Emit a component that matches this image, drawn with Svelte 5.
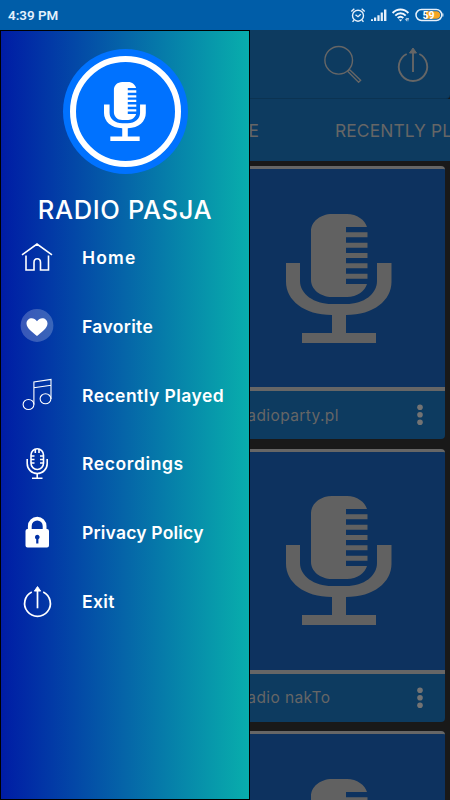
<script>
  // Entries of the side menu
  const menu = [
    { icon: "home", label: "Home", spacing: 1.2 },
    { icon: "heart", label: "Favorite", spacing: 0.35 },
    { icon: "music", label: "Recently Played", spacing: 0.45 },
    { icon: "mic", label: "Recordings", spacing: 0.6 },
    { icon: "lock", label: "Privacy Policy", spacing: 0.2 },
    { icon: "exit", label: "Exit", spacing: 0.4 }
  ];

  // Stations in the right column of the list
  const stations = ["Radioparty.pl", "Radio nakTo", ""];
</script>

{#snippet mic()}
  <svg class="mic" viewBox="0 0 106 129" preserveAspectRatio="none">
    <path d="M60 0H46C34 0 25 8 25 17V66C25 75 34 83 46 83H61C71 83 79 77 81 70H60V64.7H81.5V59.7H60V54.3H81.5V49.3H60V44H81.5V39H60V33.7H81.5V28.7H60V23.3H81.5V18.3H60V13H81C79 6 71 0 61 0Z" />
    <path d="M0 49H14V67C14 80 28 90 46 90H60C78 90 91 80 91 67V49H105.500V68C105.500 86 88 101 60 101V119H90V129H16V119H46V101C18 101 0 86 0 68Z" />
  </svg>
{/snippet}

{#snippet power()}
  <svg class="power" viewBox="0 0 32 34">
    <path class="ring" d="M9.700 6.500A14.200 14.200 0 1 0 22.300 6.500" />
    <path class="ring" d="M16 5V24.500" />
    <path class="tip" d="M16 .5L19.500 5.500H12.500Z" />
  </svg>
{/snippet}

<div class="screen">
  <div class="status">
    <span class="time">4:39 PM</span>
    <svg class="indicators" viewBox="-6 0 100 20">
      <g fill="none" stroke="#e6f0fa" stroke-width="1.400">
        <circle cx="2" cy="10.700" r="5.500" />
        <path d="M-.5 9.700L2 11.700L4.800 9.200M-4.700 6.500L-1.700 3.800M8.700 6.500L5.700 3.800M-2 15.200L-3.500 16.700M6 15.200L7.500 16.700" />
      </g>
      <path fill="#e6f0fa" d="M15 16V14.300H17V16ZM18 16V12.500H20.200V16ZM21.400 16V10.300H23.600V16ZM24.700 16V7.500H26.900V16ZM28 16V4.500H30.400V16Z" />
      <g fill="none" stroke="#f2f7fd" stroke-width="1.900">
        <path d="M36.600 8C41 3.300 48 3.300 52.400 8M39.300 10.600C42.300 7.500 46.800 7.500 49.700 10.600M41.700 13C43.600 11.200 45.500 11.200 47.300 13" />
      </g>
      <path fill="#f2f7fd" d="M44.500 16.500L42.700 14.500H46.300ZM49.300 14.500L50.700 12.500V16.500ZM51.200 13H52.700L52 17Z" />
      <rect x="60" y="4.500" width="25.800" height="11" rx="5.500" fill="none" stroke="#e6f0fa" stroke-width="1.500" />
      <path fill="#f5a623" d="M70 6.200H80.300A3.800 3.800 0 0 1 80.300 13.800H70Z" />
      <path fill="#e6f0fa" d="M86.400 8.500H87.400V11.500H86.400Z" />
      <text x="72.500" y="13.800" text-anchor="middle">59</text>
    </svg>
  </div>

  <div class="toolbar">
    <svg class="search" viewBox="0 0 38 38">
      <circle cx="14.700" cy="15.300" r="13.800" />
      <path d="M25.400 24.600L36.600 35.200L34.600 37.200L23.600 26.200M25.400 24.600L23.400 26.600" />
    </svg>
    {@render power()}
  </div>

  <div class="tabs">
    <span class="tab home">HOME</span>
    <span class="tab">RECENTLY PLAYED</span>
  </div>

  <div class="list">
    {#each stations as station}
      <div class="card">
        <div class="cover">{@render mic()}</div>
        <div class="caption">
          <span>{station}</span>
          <svg class="dots" viewBox="0 0 6 22">
            <circle cx="3" cy="3.200" r="2.800" />
            <circle cx="3" cy="10.700" r="2.800" />
            <circle cx="3" cy="18.200" r="2.800" />
          </svg>
        </div>
      </div>
    {/each}
  </div>

  <nav class="drawer">
    <div class="logo">
      <div class="disc">{@render mic()}</div>
    </div>
    <h1>RADIO PASJA</h1>
    <ul>
      {#each menu as item}
        <li>
          <div class="icon">
            {#if item.icon === "exit"}
              {@render power()}
            {:else}
              <svg viewBox="0 0 34 34">
                {#if item.icon === "home"}
                  <path class="line" d="M2 13.800L17 3L32 13.800M6 14.500V29H14V21.500C14 16.500 20.500 16.500 20.500 21.500V29H28.500V14.500" />
                {:else if item.icon === "heart"}
                  <circle cx="17" cy="16.500" r="16.400" fill="#fff" fill-opacity=".22" />
                  <path class="solid" d="M17 27C13 23.500 6.500 19.500 6.500 14.500C6.500 9 13.500 7 17 12.200C20.500 7 27.500 9 27.500 14.500C27.500 19.500 21 23.500 17 27Z" />
                {:else if item.icon === "music"}
                  <g class="line thin">
                    <ellipse cx="8.500" cy="26.500" rx="5.400" ry="5" />
                    <ellipse cx="25.500" cy="20.800" rx="5.400" ry="5" />
                    <path d="M13.900 26.500V4L31 1.500V21M13.900 9.800L31 7.300" />
                  </g>
                {:else if item.icon === "mic"}
                  <g class="line">
                    <rect x="11" y="1.800" width="12.500" height="20.700" rx="6.200" />
                    <path d="M7.200 12V16.500A9.900 9.900 0 0 0 27.200 16.500V12M17.200 26.500V31M12 31.300H22.500M11 9H14.500M11 12.500H14.500M11 16H14.500M20 9H23.500M20 12.500H23.500M20 16H23.500M15.300 2V6M19 2V6" />
                  </g>
                {:else}
                  <path d="M9.800 15V10A7.400 7.400 0 0 1 24.600 10V15" fill="none" stroke="#fff" stroke-width="3.800" />
                  <path class="solid" fill-rule="evenodd" d="M7.500 13H27Q29 13 29 15V29.500Q29 31.500 27 31.500H7.500Q5.500 31.500 5.500 29.500V15Q5.500 13 7.500 13ZM17.200 18.800A2.400 2.400 0 0 0 16.200 23.300V27.500H18.400V23.300A2.400 2.400 0 0 0 17.200 18.800Z" />
                {/if}
              </svg>
            {/if}
          </div>
          <span style="letter-spacing: {item.spacing}px">{item.label}</span>
        </li>
      {/each}
    </ul>
  </nav>
</div>

<style>
  .screen {
    position: relative;
    width: 450px;
    height: 800px;
    overflow: hidden;
    background: #191919;
    font-family: "Inter", "Open Sans", sans-serif;
    color: #666;
  }

  .status {
    display: flex;
    align-items: center;
    justify-content: space-between;
    height: 30px;
    padding: 0 0 0 8px;
    box-sizing: border-box;
    background: #005da8;
  }

  .time {
    font: 600 13.4px "Roboto", sans-serif;
    color: #e4f1fc;
  }

  .indicators {
    width: 100px;
    height: 20px;
  }

  .indicators text {
    font: 700 10.5px "Roboto", sans-serif;
    fill: #fff;
  }

  .toolbar {
    display: flex;
    align-items: center;
    justify-content: flex-end;
    gap: 35px;
    height: 69px;
    padding-right: 21px;
    box-sizing: border-box;
    background: #0d3b60;
    border-bottom: 1px solid #0b3352;
    border-radius: 0 0 4px 4px;
  }

  .search {
    width: 38px;
    height: 38px;
    fill: none;
    stroke: #666;
    stroke-width: 1.4;
  }

  .power {
    width: 32px;
    height: 35px;
    overflow: visible;
  }

  .power .ring {
    fill: none;
    stroke: currentColor;
    stroke-width: 1.9;
  }

  .power .tip {
    fill: currentColor;
    stroke: currentColor;
  }

  .tabs {
    display: flex;
    align-items: center;
    gap: 76px;
    height: 62px;
    background: #0d3b60;
    white-space: nowrap;
    font-size: 17.4px;
    letter-spacing: 0.1px;
  }

  .tab.home {
    flex: none;
    width: 259px;
    text-align: right;
  }

  .list {
    display: flex;
    flex-direction: column;
    gap: 9.5px;
    padding: 5px 5px 0 232px;
  }

  .card {
    border-top: 3px solid #666;
    border-radius: 4px;
    overflow: hidden;
    background: #0d3b60;
  }

  .cover {
    display: flex;
    align-items: center;
    justify-content: center;
    height: 218px;
    background: #0d325f;
    border-bottom: 4px solid #666;
  }

  .mic {
    display: block;
    width: 106px;
    height: 129px;
    fill: #616161;
  }

  .caption {
    display: flex;
    align-items: center;
    justify-content: space-between;
    height: 48px;
    padding: 0 22px 0 5px;
    font-size: 15.5px;
    letter-spacing: 0.4px;
  }

  .dots {
    width: 6px;
    height: 22px;
    fill: #737373;
  }

  .drawer {
    position: absolute;
    left: 0;
    top: 30px;
    width: 250px;
    height: 770px;
    box-sizing: border-box;
    border: 1px solid #000;
    background: linear-gradient(90deg, #001ca5, #0565a8 50%, #08aeac);
    color: #fff;
  }

  .logo {
    display: flex;
    align-items: center;
    justify-content: center;
    width: 125px;
    height: 125px;
    margin: 17.5px auto 0;
    border-radius: 50%;
    background: #0072ff;
  }

  .disc {
    display: flex;
    align-items: center;
    justify-content: center;
    width: 99px;
    height: 99px;
    border: 6.5px solid #fff;
    border-radius: 50%;
  }

  .disc .mic {
    width: 42px;
    height: 59px;
    fill: #fff;
  }

  h1 {
    margin: 19px 0 0;
    text-align: center;
    font-size: 25.5px;
    line-height: 34px;
    font-weight: 500;
    letter-spacing: 0.65px;
  }

  ul {
    list-style: none;
    margin: 0;
    padding: 0;
  }

  li {
    display: flex;
    align-items: center;
    gap: 28px;
    height: 68.75px;
    padding-left: 19px;
    font-size: 17.5px;
    font-weight: 600;
  }

  li:first-child {
    margin-top: -3.3px;
  }

  .icon {
    display: flex;
    justify-content: center;
    width: 34px;
  }

  .icon svg {
    width: 34px;
    height: 34px;
  }

  .icon .power {
    width: 29px;
    height: 31px;
  }

  .line {
    fill: none;
    stroke: #fff;
    stroke-width: 1.6;
  }

  .thin {
    stroke-width: 1.1;
  }

  .solid {
    fill: #fff;
  }
</style>
